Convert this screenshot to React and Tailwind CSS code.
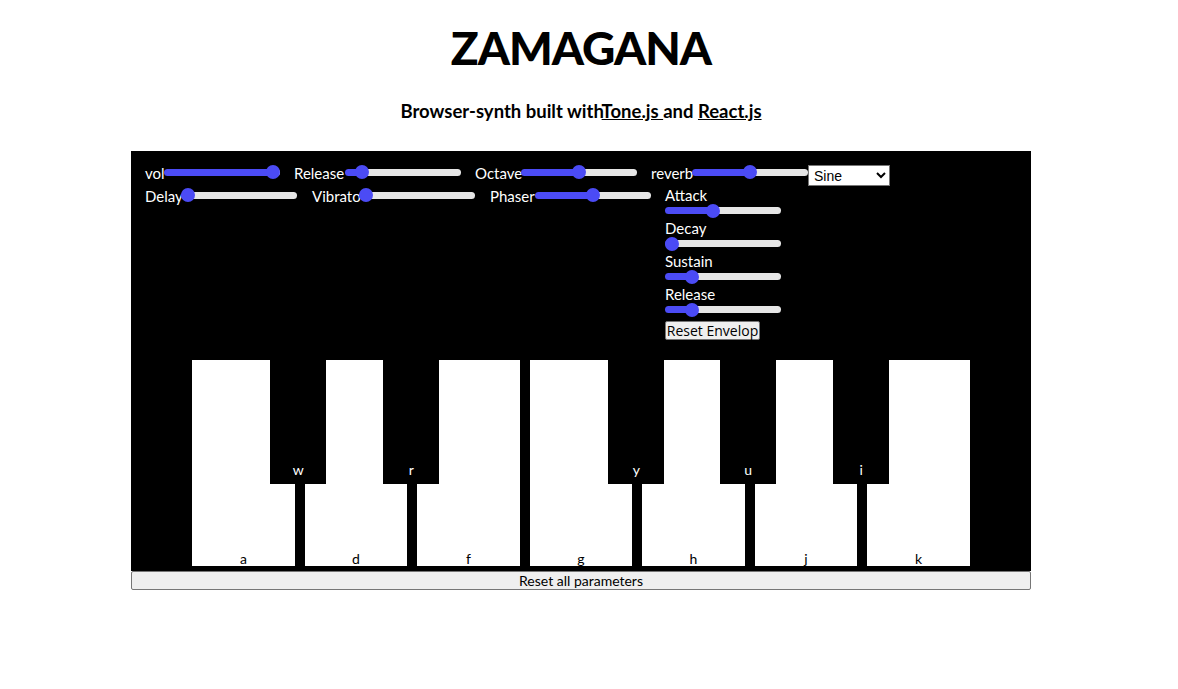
import { useState } from 'react'

const row1 = [
  { label: 'vol', lw: 'w-[19px]', v: 1 },
  { label: 'Release', lw: 'w-[51px]', v: 0.1 },
  { label: 'Octave', lw: 'w-[46px]', v: 0.5 },
  { label: 'reverb', lw: 'w-[41px]', v: 0.5 },
]

const row2 = [
  { label: 'Delay', lw: 'w-[36px]', v: 0 },
  { label: 'Vibrato', lw: 'w-[47px]', v: 0 },
  { label: 'Phaser', lw: 'w-[45px]', v: 0.5 },
]

const envelope = [
  { label: 'Attack', v: 0.4 },
  { label: 'Decay', v: 0 },
  { label: 'Sustain', v: 0.2 },
  { label: 'Release', v: 0.2 },
]

const whiteKeys = ['a', 'd', 'f', 'g', 'h', 'j', 'k']
const blackKeys = [
  { key: 'w', pos: 'left-[78px]' },
  { key: 'r', pos: 'left-[191px]' },
  { key: 'y', pos: 'left-[416px]' },
  { key: 'u', pos: 'left-[528px]' },
  { key: 'i', pos: 'left-[641px]' },
]

function Slider({ initial }) {
  const [value, setValue] = useState(initial * 100)
  // fill ends under the thumb centre (thumb 14px on a 116px track)
  const fill = 7 + (value / 100) * 102
  return (
    <input
      type="range"
      min="0"
      max="100"
      value={value}
      onChange={e => setValue(Number(e.target.value))}
      style={{ background: `linear-gradient(to right, #4b4bf5 ${fill}px, #e6e6e6 ${fill}px)` }}
      className="appearance-none w-[116px] h-[7px] rounded-full outline-none cursor-pointer [&::-webkit-slider-thumb]:appearance-none [&::-webkit-slider-thumb]:w-[14px] [&::-webkit-slider-thumb]:h-[14px] [&::-webkit-slider-thumb]:rounded-full [&::-webkit-slider-thumb]:bg-[#4b4bf5]"
    />
  )
}

function Control({ label, lw, v }) {
  return (
    <div className="flex items-center h-[20px]">
      <span className={`${lw} whitespace-nowrap`}>{label}</span>
      <div className="mb-[2px] flex">
        <Slider initial={v} />
      </div>
    </div>
  )
}

export default function App() {
  return (
    <div className="w-[1162px] bg-white text-black font-['Lato',sans-serif]">
      {/* Titre */}
      <h1 className="mt-[25px] text-center text-[46px] leading-[46px] font-black tracking-[-1px]">
        ZAMAGANA
      </h1>
      <p className="mt-[28px] text-center text-[18.5px] leading-[24px] font-bold">
        Browser-synth built with
        <a href="#" className="underline text-black">Tone.js </a>
        and <a href="#" className="underline text-black">React.js</a>
      </p>

      {/* Synth */}
      <div className="mt-[28px] mx-auto w-[900px]">
        <div className="bg-black text-white text-[15px] pt-[12px] pb-[5px]">
          <div className="pl-[14px]">
            <div className="flex items-start gap-[14px]">
              {row1.map(c => (
                <Control key={c.label} {...c} />
              ))}
              <select
                defaultValue="Sine"
                className="-ml-[14px] mt-[2px] -mb-[3px] w-[82px] h-[21px] bg-white text-black border border-[#767676] text-[14px] font-['Liberation_Sans',sans-serif] pl-[1px]"
              >
                <option>Sine</option>
                <option>Square</option>
                <option>Triangle</option>
                <option>Sawtooth</option>
              </select>
            </div>

            <div className="flex items-start gap-[15px] mt-[3px]">
              {row2.map(c => (
                <Control key={c.label} {...c} />
              ))}
              <div className="-ml-[1px] flex flex-col">
                {envelope.map(e => (
                  <div key={e.label} className="flex flex-col mb-[2px]">
                    <span className="h-[18px] leading-[18px]">{e.label}</span>
                    <div className="h-[13px] flex items-center">
                      <Slider initial={e.v} />
                    </div>
                  </div>
                ))}
                <button className="mt-[3px] self-start h-[19px] w-[95px] bg-[#efefef] text-black border border-[#767676] rounded-[2px] text-[14px] leading-[16px] font-['Open_Sans',sans-serif]">
                  Reset Envelop
                </button>
              </div>
            </div>
          </div>

          {/* Clavier */}
          <div className="mt-[20px] flex justify-center">
            <div className="relative flex gap-[10px]">
              {whiteKeys.map(k => (
                <div
                  key={k}
                  className="w-[102.5px] h-[206px] bg-white text-black text-[14px] leading-[14px] flex items-end justify-center"
                >
                  {k}
                </div>
              ))}
              {blackKeys.map(b => (
                <div
                  key={b.key}
                  className={`absolute top-0 ${b.pos} w-[56px] h-[124px] bg-black text-white text-[14px] leading-[16px] flex items-end justify-center pb-[6px]`}
                >
                  {b.key}
                </div>
              ))}
            </div>
          </div>
        </div>
        <button className="block w-full h-[19px] bg-[#efefef] border border-[#767676] rounded-[2px] text-[14px] leading-[16px] text-black">
          Reset all parameters
        </button>
      </div>
    </div>
  )
}
